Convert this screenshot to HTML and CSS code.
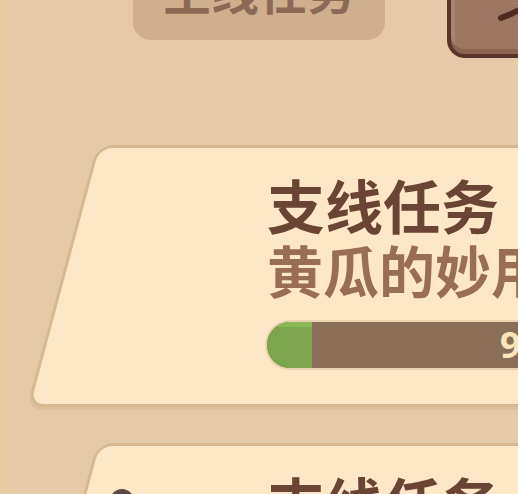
FILE: index.html
```html
<!DOCTYPE html>
<html>
<head>
  <title>任务</title>
  <link rel="stylesheet" href="styles.css">
</head>
<body>
  <div class="screen">
    <div class="topbar">
      <div class="tab">主线任务</div>
      <div class="icon-button">
        <svg width="80" height="80" viewBox="0 0 80 80">
          <path d="M50 54 L60 50 L72 44" fill="none" stroke="#4e2c22" stroke-width="6" stroke-linecap="round"/>
        </svg>
      </div>
    </div>

    <div class="quest">
      <div class="quest-type">支线任务</div>
      <div class="quest-name">黄瓜的妙用</div>
      <div class="progress">
        <div class="progress-fill"></div>
        <div class="progress-text">9/10</div>
      </div>
    </div>

    <div class="quest">
      <div class="quest-badge"></div>
      <div class="quest-type">支线任务</div>
      <div class="quest-name">番茄的烦恼</div>
    </div>
  </div>
</body>
</html>
```

FILE: styles.css
```css
body {
  margin: 0;
  font-family: "Noto Sans CJK SC", "Noto Sans", sans-serif;
  background: #e6c9a6;
}

.screen {
  width: 518px;
  height: 494px;
  overflow: hidden;
  background: linear-gradient(to right, #e5cd9f 0px, #e6caa4 14px, #e6c9a6 40px);
}

.topbar {
  display: flex;
  align-items: flex-start;
  height: 145px;
}

.tab {
  flex-shrink: 0;
  margin-left: 133px;
  margin-top: -50px;
  width: 252px;
  height: 90px;
  box-sizing: border-box;
  background: #d0b08c;
  border-radius: 18px;
  color: #8b6a55;
  font-size: 48px;
  font-weight: bold;
  line-height: 48px;
  display: flex;
  align-items: flex-end;
  justify-content: center;
  padding-bottom: 27px;
}

.icon-button {
  flex-shrink: 0;
  margin-left: 62px;
  margin-top: -30px;
  width: 100px;
  height: 88px;
  box-sizing: border-box;
  border: 4px solid #5a3428;
  border-radius: 18px;
  background: #9c7761;
  box-shadow: inset 0 -5px 0 #8a6550, inset 4px 0 0 #a9846c;
  overflow: hidden;
}

.icon-button svg {
  display: block;
  margin-top: -10px;
}

.quest {
  position: relative;
  margin-left: 62px;
  width: 560px;
  height: 262px;
  box-sizing: border-box;
  padding: 28px 0 0 205px;
  margin-bottom: 36px;
  color: #6b4433;
}

.quest::before {
  content: "";
  position: absolute;
  inset: 0;
  z-index: 0;
  background: #fde7c6;
  border: 3px solid #d8b98f;
  border-radius: 16px;
  transform: skewX(-15deg);
  box-shadow: 0 3px 0 #dcc09c;
}

.quest > * {
  position: relative;
}

.quest-type {
  font-size: 58px;
  font-weight: bold;
  line-height: 62px;
  white-space: nowrap;
}

.quest-name {
  margin-top: 4px;
  font-size: 56px;
  font-weight: bold;
  line-height: 60px;
  color: #9a6d55;
  white-space: nowrap;
}

.progress {
  margin-top: 23px;
  height: 46px;
  display: flex;
  background: #8b6e58;
  border-radius: 23px 0 0 23px;
  box-shadow: 0 0 0 2px #ead2ae;
  overflow: hidden;
}

.progress-fill {
  width: 45px;
  background: #7ca64b;
  box-shadow: inset 0 5px 0 #8cb858;
}

.progress-text {
  margin-left: 188px;
  color: #fce6b8;
  font-family: "Noto Sans", sans-serif;
  font-size: 36px;
  font-weight: bold;
  line-height: 46px;
}

.quest .quest-badge {
  position: absolute;
  left: 48px;
  top: 46px;
  width: 24px;
  height: 24px;
  border-radius: 50%;
  background: #5b4a42;
}
```
